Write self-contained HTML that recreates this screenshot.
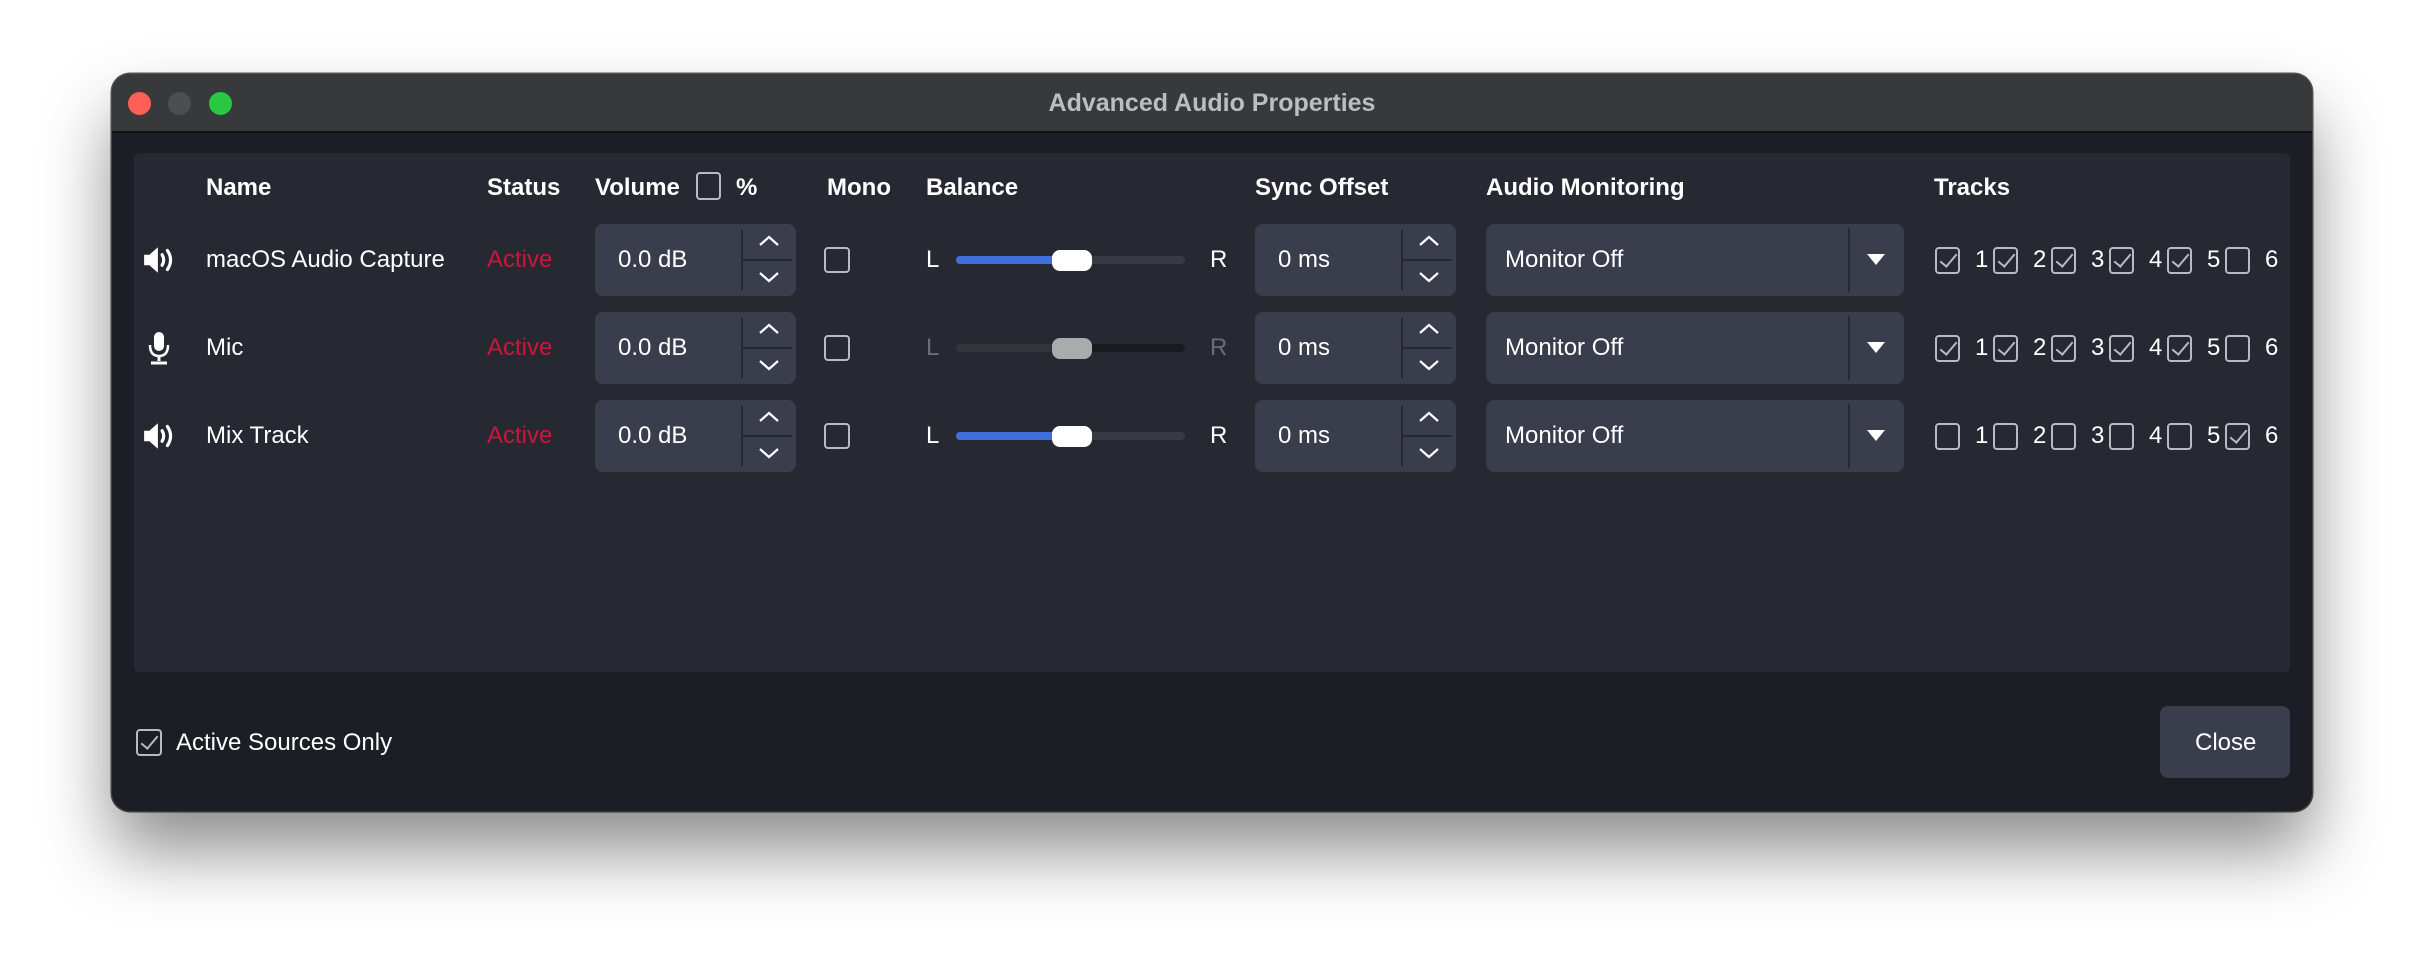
<!DOCTYPE html>
<html><head><meta charset="utf-8"><style>
*{margin:0;padding:0;box-sizing:border-box}
body{width:2424px;height:960px;background:#fff;position:relative;overflow:hidden;font-family:"Liberation Sans",sans-serif;color:#fff}
.win{position:absolute;left:112px;top:74px;width:2200px;height:737px;border-radius:18px;background:#1d1e25;box-shadow:0 40px 70px rgba(0,0,0,.45),0 0 0 1.5px #555;overflow:hidden}
.tb{position:absolute;left:0;top:0;width:100%;height:59px;background:#38393b;border-bottom:2px solid #111}
.tl{position:absolute;top:92px;width:23px;height:23px;border-radius:50%}
.title{position:absolute;left:0;width:2424px;top:89px;text-align:center;font-size:25px;font-weight:bold;color:#bdbdbd}
.panel{position:absolute;left:134px;top:153px;width:2156px;height:519px;background:#262932;border-radius:6px}
.a{position:absolute;white-space:nowrap}
.h{font-size:24px;font-weight:bold;top:174px}
.t{font-size:24px}
.red{color:#c8173a}
.box{position:absolute;background:#3a3d4b;border-radius:8px}
.div{position:absolute;top:6px;bottom:6px;width:2px;background:#262832}
.hl{position:absolute;height:2px;background:#262832}
.cb{position:absolute;width:26px;height:26px;border:2px solid #b9bbc2;border-radius:4px}
.ck::after{content:"";position:absolute;left:7px;top:1px;width:7px;height:15px;border-right:2px solid #b9bbc2;border-bottom:2px solid #b9bbc2;transform:rotate(40deg)}
.trk{position:absolute;height:8px;border-radius:4px}
.hd{position:absolute;width:40px;height:21px;border-radius:8px}
svg{position:absolute}
</style></head><body>
<div class="win"><div class="tb"></div></div>
<div class="tl" style="left:128px;background:#fe5f57"></div>
<div class="tl" style="left:168px;background:#4d4e50"></div>
<div class="tl" style="left:209px;background:#28c840"></div>
<div class="title">Advanced Audio Properties</div>
<div class="panel"></div>

<div class="a h" style="left:206px">Name</div>
<div class="a h" style="left:487px">Status</div>
<div class="a h" style="left:595px">Volume</div>
<div class="cb" style="left:696px;top:172px;width:25px;height:28px"></div>
<div class="a h" style="left:736px">%</div>
<div class="a h" style="left:827px">Mono</div>
<div class="a h" style="left:926px">Balance</div>
<div class="a h" style="left:1255px">Sync Offset</div>
<div class="a h" style="left:1486px">Audio Monitoring</div>
<div class="a h" style="left:1934px">Tracks</div>

<div id="rows"></div>
<script>
var rows=[{y:260,n:"macOS Audio Capture",ic:"spk",dis:false,tr:[1,1,1,1,1,0]},{y:348,n:"Mic",ic:"mic",dis:true,tr:[1,1,1,1,1,0]},{y:436,n:"Mix Track",ic:"spk",dis:false,tr:[0,0,0,0,0,1]}];
var h="";
rows.forEach(function(r){
var y=r.y;
if(r.ic=="spk"){h+='<svg style="left:142px;top:'+(y-16)+'px" width="36" height="32" viewBox="0 0 34 28"><path d="M2 9h5l8-7v24l-8-7H2z" fill="#fff"/><path d="M19 9q3 5 0 10M24 5q6 9 0 18" stroke="#fff" stroke-width="3" fill="none" stroke-linecap="round"/></svg>';}
else{h+='<svg style="left:146px;top:'+(y-17)+'px" width="26" height="34" viewBox="0 0 26 34"><rect x="8" y="1" width="10" height="19" rx="5" fill="#fff"/><path d="M4 14q0 11 9 11q9 0 9-11" stroke="#fff" stroke-width="2.5" fill="none"/><path d="M13 25v5M5 32h16" stroke="#fff" stroke-width="3"/></svg>';}
h+='<div class="a t" style="left:206px;top:'+(y-14)+'px">'+r.n+'</div>';
h+='<div class="a t red" style="left:487px;top:'+(y-14)+'px">Active</div>';
h+='<div class="box" style="left:595px;top:'+(y-36)+'px;width:201px;height:72px"><div class="div" style="left:146px"></div><div class="hl" style="left:148px;right:4px;top:35px"></div></div>';
h+='<div class="a t" style="left:618px;top:'+(y-14)+'px">0.0 dB</div>';
h+=arrows(768,y);
h+='<div class="cb" style="left:824px;top:'+(y-13)+'px"></div>';
var lc=r.dis?"#6b6d74":"#fff";
h+='<div class="a t" style="left:926px;top:'+(y-14)+'px;color:'+lc+'">L</div>';
h+='<div class="a t" style="left:1210px;top:'+(y-14)+'px;color:'+lc+'">R</div>';
if(r.dis){h+='<div class="trk" style="left:956px;width:229px;top:'+(y-4)+'px;background:#32343c"></div><div class="trk" style="left:1090px;width:95px;top:'+(y-4)+'px;background:#1a1b20"></div><div class="hd" style="left:1052px;top:'+(y-10)+'px;background:#aaabad"></div>';}
else{h+='<div class="trk" style="left:956px;width:229px;top:'+(y-4)+'px;background:#383a43"></div><div class="trk" style="left:956px;width:110px;top:'+(y-4)+'px;background:#3f6fde"></div><div class="hd" style="left:1052px;top:'+(y-10)+'px;background:#fff"></div>';}
h+='<div class="box" style="left:1255px;top:'+(y-36)+'px;width:201px;height:72px"><div class="div" style="left:146px"></div><div class="hl" style="left:148px;right:4px;top:35px"></div></div>';
h+='<div class="a t" style="left:1278px;top:'+(y-14)+'px">0 ms</div>';
h+=arrows(1428,y);
h+='<div class="box" style="left:1486px;top:'+(y-36)+'px;width:418px;height:72px"><div class="div" style="left:362px;top:4px;bottom:4px"></div></div>';
h+='<div class="a t" style="left:1505px;top:'+(y-14)+'px">Monitor Off</div>';
h+='<svg style="left:1867px;top:'+(y-6)+'px" width="18" height="12"><path d="M0 0h18l-9 11z" fill="#fff"/></svg>';
for(var i=0;i<6;i++){var x=1935+i*58;
h+='<div class="cb'+(r.tr[i]?' ck':'')+'" style="left:'+x+'px;top:'+(y-13)+'px;width:25px;height:27px"></div>';
h+='<div class="a t" style="left:'+(x+40)+'px;top:'+(y-14)+'px">'+(i+1)+'</div>';}
});
function arrows(cx,y){return '<svg style="left:'+(cx-10)+'px;top:'+(y-26)+'px" width="22" height="52"><path d="M2 11l9-8 9 8M2 39l9 8 9-8" stroke="#fff" stroke-width="2.2" fill="none"/></svg>';}
document.getElementById("rows").innerHTML=h;
</script>

<div class="cb ck" style="left:136px;top:729px;width:26px;height:27px"></div>
<div class="a t" style="left:176px;top:729px">Active Sources Only</div>
<div class="box" style="left:2160px;top:706px;width:130px;height:72px"></div>
<div class="a t" style="left:2195px;top:729px">Close</div>
</body></html>
